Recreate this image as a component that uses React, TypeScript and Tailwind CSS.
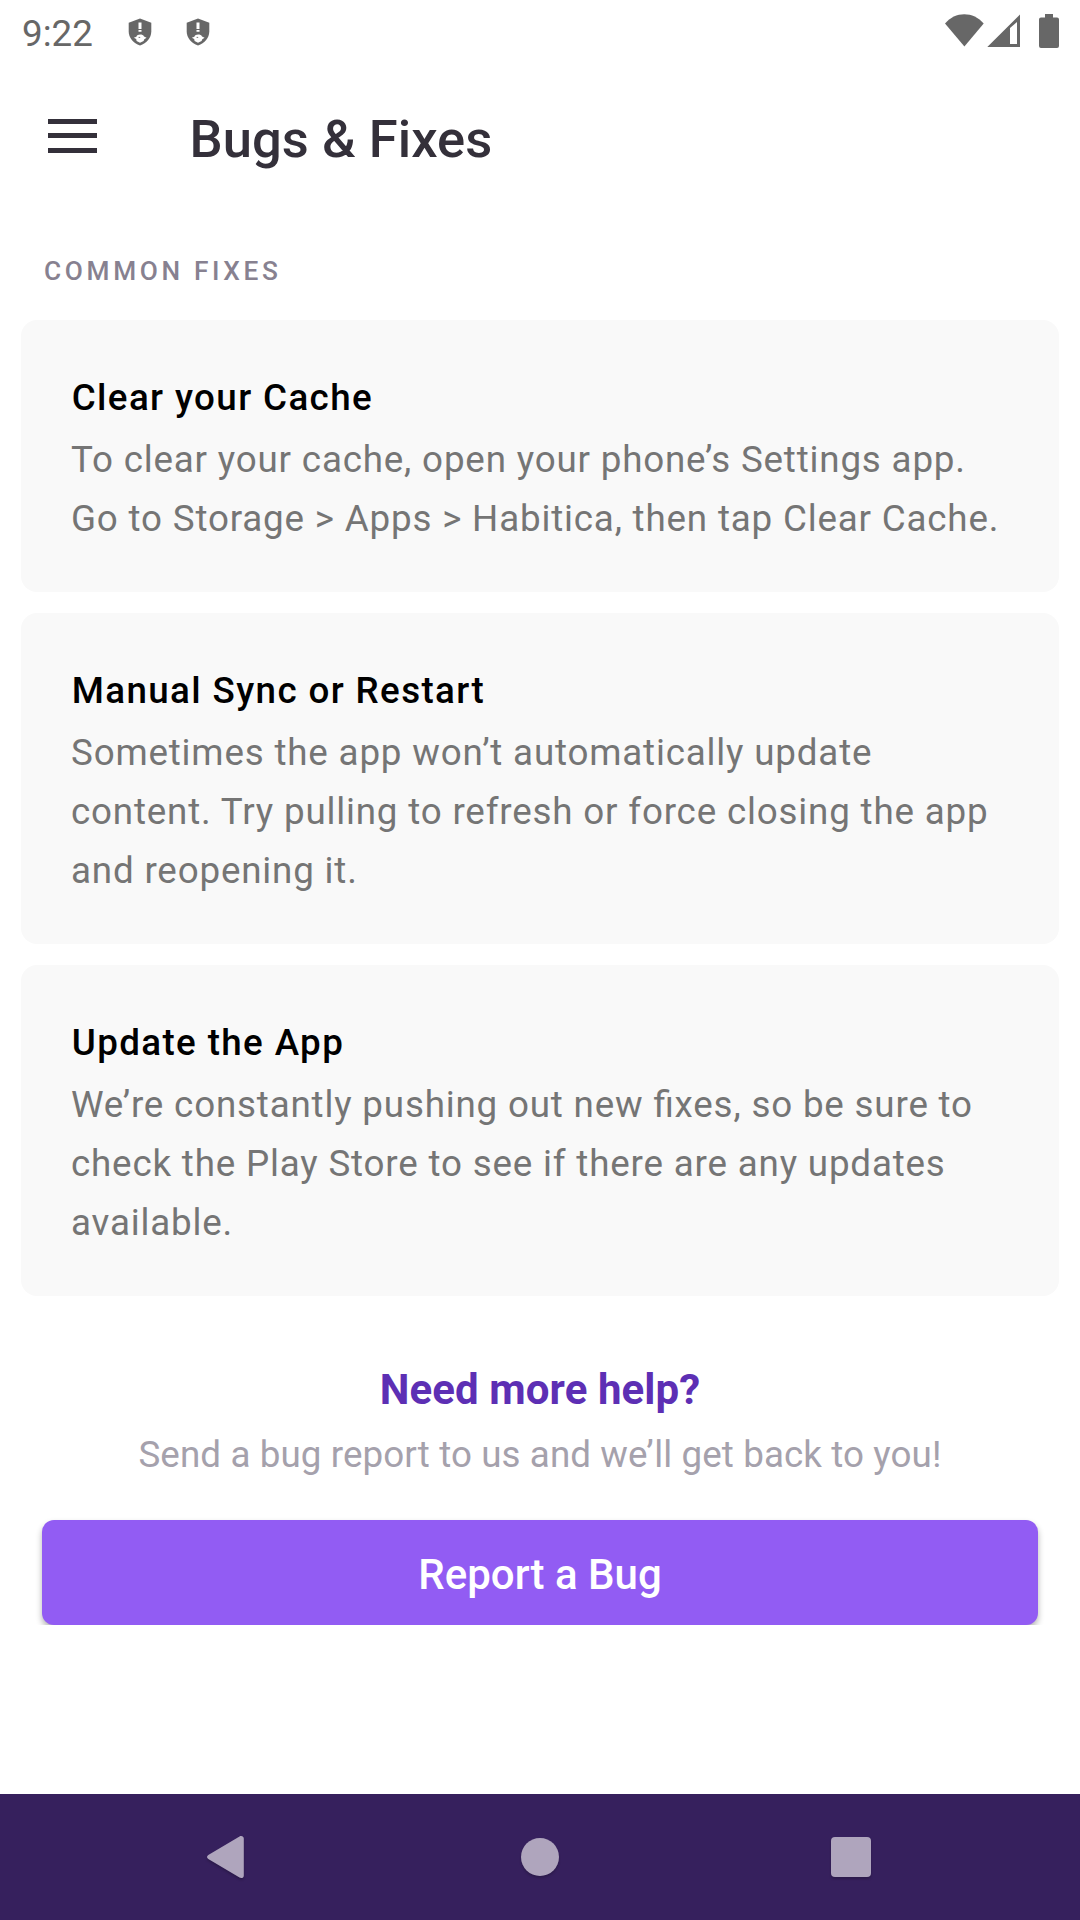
import React from "react";

const fixes = [
  {
    title: "Clear your Cache",
    lines: ["To clear your cache, open your phone’s Settings app.", "Go to Storage > Apps > Habitica, then tap Clear Cache."],
  },
  {
    title: "Manual Sync or Restart",
    lines: ["Sometimes the app won’t automatically update", "content. Try pulling to refresh or force closing the app", "and reopening it."],
  },
  {
    title: "Update the App",
    lines: ["We’re constantly pushing out new fixes, so be sure to", "check the Play Store to see if there are any updates", "available."],
  },
];

function Shield() {
  return (
    <svg width="24" height="28" viewBox="0 0 24 28" className="block">
      <path d="M12 0.5 23.3 4.8v8.6c0 6.2-4.6 11.6-11.3 14C5.3 25 .7 19.600 .7 13.400V4.800z" fill="#676767" />
      <path d="M10.500 4.500h3v6.600h-3zM10.500 11.900h3v1.900h-3z" fill="#fff" />
      <path d="M5.800 19.800 8.400 18.800C9 15.800 15 15.800 16 18.400L18.600 19.800 16.300 21.300 15.600 23 12 24.800 8.600 23 8.200 21z" fill="#fff" />
      <path d="M10.600 18.900h1.600v.9h-1.600z" fill="#676767" />
    </svg>
  );
}

export default function App() {
  return (
    <div className="flex h-[1920px] w-[1080px] flex-col overflow-hidden bg-white font-['Roboto',sans-serif]">
      <header className="flex h-[63px] items-start justify-between px-[21px]">
        <div className="flex items-start">
          <span className="w-[107px] pt-[12px] pl-px text-[36.75px] leading-[44px] text-[#676767]">9:22</span>
          <div className="flex gap-[34px] pt-[18px]">
            <Shield />
            <Shield />
          </div>
        </div>
        <svg width="114" height="36" viewBox="0 0 114 36" className="mt-[12px] block" fill="#676767">
          <path d="M0 11.500C10 -1 28.500 -1 38.700 11.500L19.400 34.500z" />
          <path fillRule="evenodd" d="M75 2.500V35H42.300zM65 16v16h7V10z" />
          <path d="M100 2h8v3.500h4a2 2 0 0 1 2 2v26.500a2 2 0 0 1-2 2H96a2 2 0 0 1-2-2V7.500a2 2 0 0 1 2-2h4z" />
        </svg>
      </header>

      <div className="flex h-[147px] items-start pl-[48px]">
        <button className="mt-[56px] flex w-[49px] flex-col gap-[9.250px]" aria-label="Menu">
          <span className="h-[5px] w-full bg-[#34303a]" />
          <span className="h-[5px] w-full bg-[#34303a]" />
          <span className="h-[5px] w-full bg-[#34303a]" />
        </button>
        <h1 className="mt-[46px] ml-[92.5px] text-[52.5px] leading-[60px] font-medium tracking-[0.05px] text-[#34303a]">Bugs &amp; Fixes</h1>
      </div>

      <main className="flex flex-1 flex-col">
        <h2 className="mt-[41px] mb-[29px] pl-[44px] text-[26.25px] leading-[40px] font-medium tracking-[3.65px] text-[#878190]">COMMON FIXES</h2>
        <div className="flex flex-col gap-[21px] px-[21px]">
          {fixes.map((fix) => (
            <section key={fix.title} className="rounded-[16px] bg-[#f9f9f9] px-[50px] pt-[48px] pb-[44px]">
              <h3 className="mb-[2px] pl-[0.75px] text-[36.75px] leading-[60px] font-medium tracking-[1.38px] text-black">{fix.title}</h3>
              <p className="text-[36.75px] leading-[59px] tracking-[0.82px] text-[#757575] [font-feature-settings:'liga'_1]">
                {fix.lines.map((line) => (
                  <span key={line} className="block whitespace-nowrap">{line}</span>
                ))}
              </p>
            </section>
          ))}
        </div>
        <div className="flex flex-col items-center px-[42px] pt-[64px]">
          <h3 className="text-[42px] leading-[60px] font-bold tracking-[0.1px] text-[#5d2fb4]">Need more help?</h3>
          <p className="mt-[5px] text-[36.75px] leading-[60px] tracking-[0.1px] text-[#a5a1ac]">Send a bug report to us and we’ll get back to you!</p>
        </div>
        <div className="mt-[27px] overflow-hidden px-[42px] pt-[8px]">
          <button className="flex h-[105px] w-full items-center justify-center rounded-[12px] bg-[#925cf3] pt-[4px] text-[42px] font-medium text-white shadow-[0_4px_6px_rgba(0,0,0,0.3)]">Report a Bug</button>
        </div>
      </main>

      <nav className="h-[126px] shrink-0 bg-[#36205d]">
        <svg width="1080" height="126" viewBox="0 0 1080 126" className="block drop-shadow-[0_2px_1px_rgba(0,0,0,0.2)]" fill="#afa5bd">
          <path d="M239.500 42.400 208.300 61c-1.700 1-1.700 3 0 4L239.500 83.600c2 1 4.300.2 4.300-2.200V44.600c0-2.400-2.300-3.300-4.300-2.200z" />
          <circle cx="540" cy="63" r="19" />
          <rect x="831" y="43" width="40" height="40" rx="4" />
        </svg>
      </nav>
    </div>
  );
}
